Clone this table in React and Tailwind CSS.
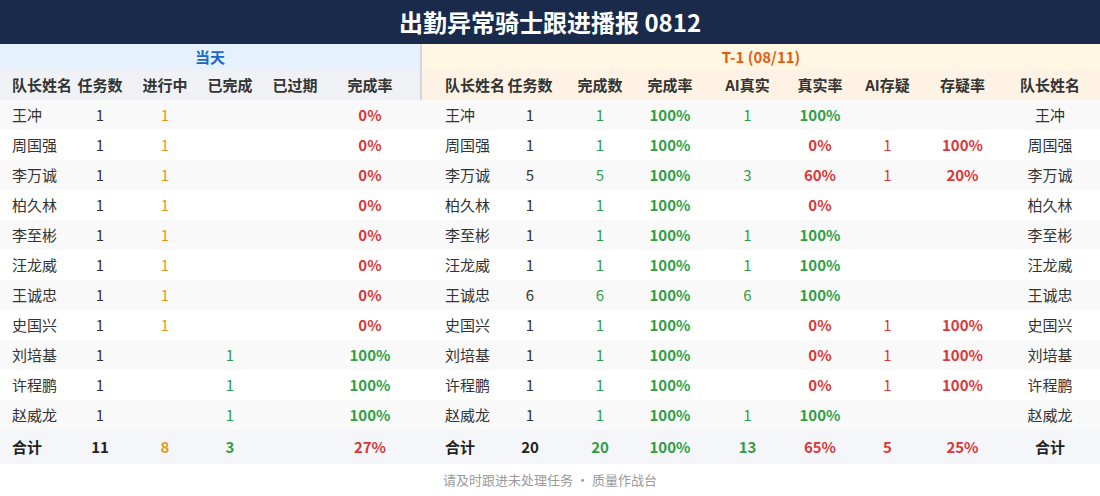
const GREEN = 'text-[#2f9e46]';
const RED = 'text-[#d93838]';
const ORANGE = 'text-[#e39a1c]';

const leftCols = 'grid grid-cols-[70px_60px_70px_60px_70px_80px]';
const rightCols = 'grid grid-cols-[62px_70px_70px_70px_85px_60px_75px_75px_100px]';

// 当天
const today = [
  ['王冲', 1, 1, null, null, '0%'],
  ['周国强', 1, 1, null, null, '0%'],
  ['李万诚', 1, 1, null, null, '0%'],
  ['柏久林', 1, 1, null, null, '0%'],
  ['李至彬', 1, 1, null, null, '0%'],
  ['汪龙威', 1, 1, null, null, '0%'],
  ['王诚忠', 1, 1, null, null, '0%'],
  ['史国兴', 1, 1, null, null, '0%'],
  ['刘培基', 1, null, 1, null, '100%'],
  ['许程鹏', 1, null, 1, null, '100%'],
  ['赵威龙', 1, null, 1, null, '100%'],
];

// T-1
const yesterday = [
  [1, 1, '100%', 1, '100%', null, null],
  [1, 1, '100%', null, '0%', 1, '100%'],
  [5, 5, '100%', 3, '60%', 1, '20%'],
  [1, 1, '100%', null, '0%', null, null],
  [1, 1, '100%', 1, '100%', null, null],
  [1, 1, '100%', 1, '100%', null, null],
  [6, 6, '100%', 6, '100%', null, null],
  [1, 1, '100%', null, '0%', 1, '100%'],
  [1, 1, '100%', null, '0%', 1, '100%'],
  [1, 1, '100%', null, '0%', 1, '100%'],
  [1, 1, '100%', 1, '100%', null, null],
];

const rateColor = (r) => (r === '100%' ? GREEN : RED);

function Cell({ children, className = '' }) {
  return <div className={`text-center whitespace-nowrap ${className}`}>{children}</div>;
}

function Rate({ value }) {
  return <Cell className={`font-bold ${rateColor(value)}`}>{value}</Cell>;
}

export default function App() {
  return (
    <div
      className="w-[1100px] h-[496px] bg-white text-[15px] text-[#333] overflow-hidden"
      style={{ fontFamily: '"Noto Sans CJK SC", "Noto Sans", sans-serif' }}
    >
      {/* Title */}
      <div className="h-[44px] bg-[#192a4b] flex items-center justify-center">
        <h1 className="text-white text-[24px] font-bold leading-none">出勤异常骑士跟进播报 0812</h1>
      </div>

      {/* Group + column headers */}
      <div className="flex font-bold">
        <div className="w-[422px] border-r-2 border-[#d3d6dc]">
          <div className="h-[26px] bg-[#e5f1fd] flex items-center justify-center text-[#1b68c8]">当天</div>
          <div className={`${leftCols} h-[30px] items-center bg-[#eff1f5]`}>
            <div className="pl-3 whitespace-nowrap">队长姓名</div>
            <Cell>任务数</Cell>
            <Cell>进行中</Cell>
            <Cell>已完成</Cell>
            <Cell>已过期</Cell>
            <Cell>完成率</Cell>
          </div>
        </div>
        <div className="flex-1">
          <div className="h-[26px] bg-[#fff6e3] flex items-center justify-center text-[#e65c0f]">T-1 (08/11)</div>
          <div className={`${rightCols} h-[30px] items-center bg-[#fdf2e4] pl-[11px]`}>
            <div className="pl-3 whitespace-nowrap">队长姓名</div>
            <Cell>任务数</Cell>
            <Cell>完成数</Cell>
            <Cell>完成率</Cell>
            <Cell>AI真实</Cell>
            <Cell>真实率</Cell>
            <Cell>AI存疑</Cell>
            <Cell>存疑率</Cell>
            <Cell>队长姓名</Cell>
          </div>
        </div>
      </div>

      {/* Rows */}
      {today.map((row, i) => {
        const [name, tasks, inprog, done, expired, rate] = row;
        const y = yesterday[i];
        return (
          <div key={name} className={`flex h-[30px] items-center ${i % 2 === 0 ? 'bg-[#f9f9f9]' : 'bg-white'}`}>
            <div className={`${leftCols} w-[422px]`}>
              <div className="pl-3 whitespace-nowrap">{name}</div>
              <Cell>{tasks}</Cell>
              <Cell className={ORANGE}>{inprog}</Cell>
              <Cell className={GREEN}>{done}</Cell>
              <Cell>{expired}</Cell>
              <Rate value={rate} />
            </div>
            <div className={`${rightCols} pl-[11px]`}>
              <div className="pl-3 whitespace-nowrap">{name}</div>
              <Cell>{y[0]}</Cell>
              <Cell className={GREEN}>{y[1]}</Cell>
              <Rate value={y[2]} />
              <Cell className={GREEN}>{y[3]}</Cell>
              <Rate value={y[4]} />
              <Cell className={RED}>{y[5]}</Cell>
              <Cell className={`font-bold ${RED}`}>{y[6]}</Cell>
              <Cell>{name}</Cell>
            </div>
          </div>
        );
      })}

      {/* Total */}
      <div className="flex h-[34px] items-center bg-[#f4f6fa] font-bold text-[#222]">
        <div className={`${leftCols} w-[422px]`}>
          <div className="pl-3">合计</div>
          <Cell>11</Cell>
          <Cell className={ORANGE}>8</Cell>
          <Cell className={GREEN}>3</Cell>
          <Cell />
          <Cell className={RED}>27%</Cell>
        </div>
        <div className={`${rightCols} pl-[11px]`}>
          <div className="pl-3">合计</div>
          <Cell>20</Cell>
          <Cell className={GREEN}>20</Cell>
          <Cell className={GREEN}>100%</Cell>
          <Cell className={GREEN}>13</Cell>
          <Cell className={RED}>65%</Cell>
          <Cell className={RED}>5</Cell>
          <Cell className={RED}>25%</Cell>
          <Cell>合计</Cell>
        </div>
      </div>

      {/* Footer */}
      <div className="h-[32px] flex items-center justify-center text-[13px] text-[#9a9a9a]">
        请及时跟进未处理任务 · 质量作战台
      </div>
    </div>
  );
}
